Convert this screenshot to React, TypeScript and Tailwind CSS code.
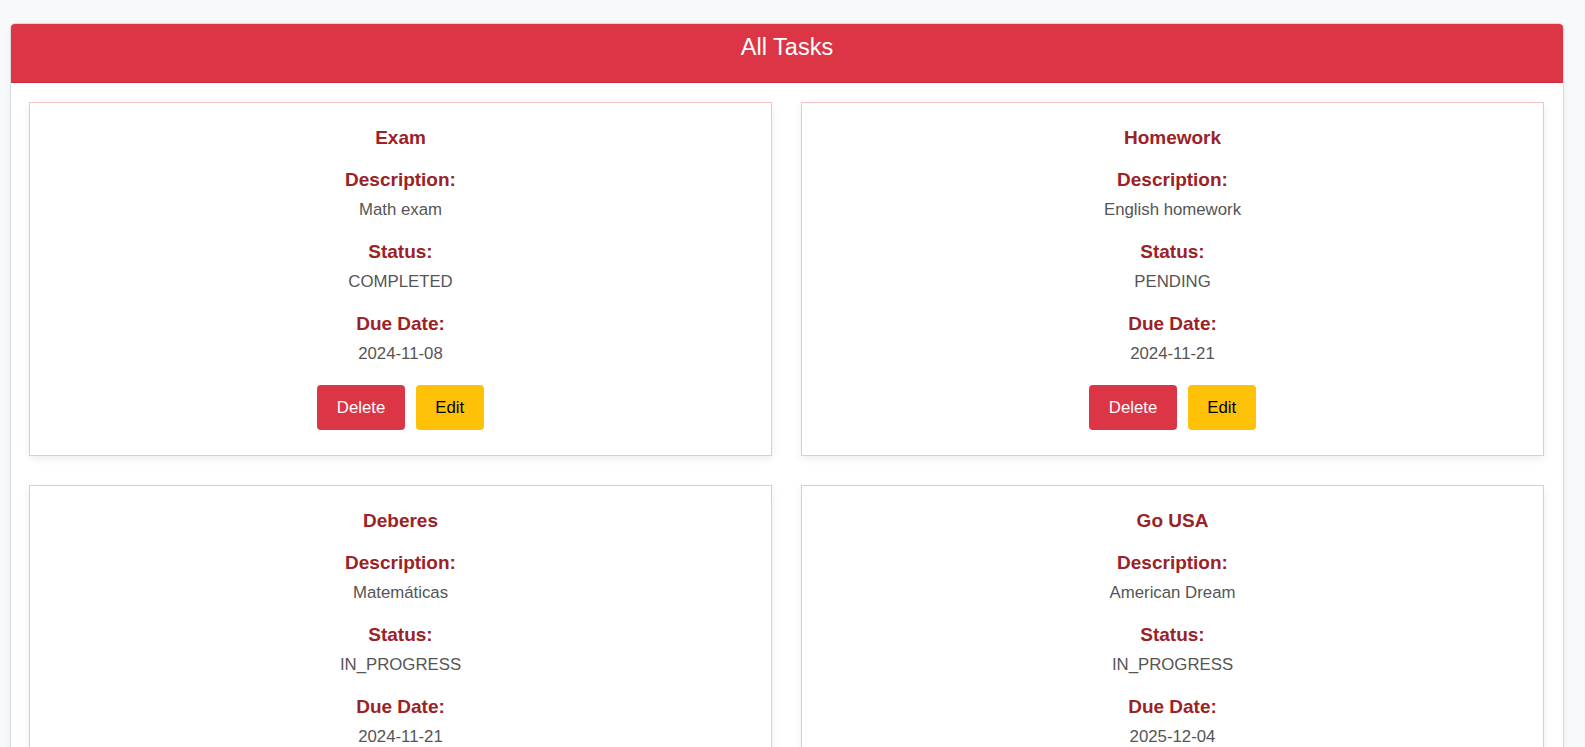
const tasks = [
  { title: "Exam", description: "Math exam", status: "COMPLETED", dueDate: "2024-11-08" },
  { title: "Homework", description: "English homework", status: "PENDING", dueDate: "2024-11-21" },
  { title: "Deberes", description: "Matemáticas", status: "IN_PROGRESS", dueDate: "2024-11-21" },
  { title: "Go USA", description: "American Dream", status: "IN_PROGRESS", dueDate: "2025-12-04" },
];

type Task = (typeof tasks)[number];

const cls = {
  heading: "text-[19px] leading-[22px] font-bold text-[#9b2226]",
  value: "text-[16.8px] leading-[24px] text-[#555]",
};

function Field({ label, value }: { label: string; value: string }) {
  return (
    <div className="flex flex-col items-center">
      <h6 className={`${cls.heading} mb-[7px]`}>{label}</h6>
      <p className={`${cls.value} mb-[19px]`}>{value}</p>
    </div>
  );
}

function TaskCard({ task }: { task: Task }) {
  return (
    <div className="flex flex-col items-center border border-[#f5c2c7] bg-white px-4 pt-[24px] pb-[25px] text-center shadow-[0_3px_8px_rgba(0,0,0,0.07)]">
      <h5 className={`${cls.heading} mb-[20px]`}>{task.title}</h5>
      <Field label="Description:" value={task.description} />
      <Field label="Status:" value={task.status} />
      <Field label="Due Date:" value={task.dueDate} />
      <div className="flex gap-[11px]">
        <button className="h-[45px] rounded-[4px] bg-[#dc3545] px-[19.5px] text-[16.8px] text-white">Delete</button>
        <button className="h-[45px] rounded-[4px] bg-[#ffc107] px-[19.5px] text-[16.8px] text-black">Edit</button>
      </div>
    </div>
  );
}

export default function App() {
  return (
    <div className="h-screen overflow-hidden bg-[#f8f9fa] pt-[23px] pl-[10px] pr-[21px] font-['Liberation_Sans',Arial,sans-serif]">
      <div className="overflow-hidden rounded-[5px] border border-[#d9dcdf] bg-white shadow-[0_2px_6px_rgba(0,0,0,0.06)]">
        <div className="h-[59px] border-b border-[#c52e3c] bg-[#dc3545] pt-[9px] text-center">
          <h2 className="text-[23.5px] leading-[28px] text-white">All Tasks</h2>
        </div>
        <div className="grid grid-cols-2 gap-x-[29px] gap-y-[29px] pt-[19px] pl-[18px] pr-[19px] pb-5">
          {tasks.map((t) => (
            <TaskCard key={t.title} task={t} />
          ))}
        </div>
      </div>
    </div>
  );
}
